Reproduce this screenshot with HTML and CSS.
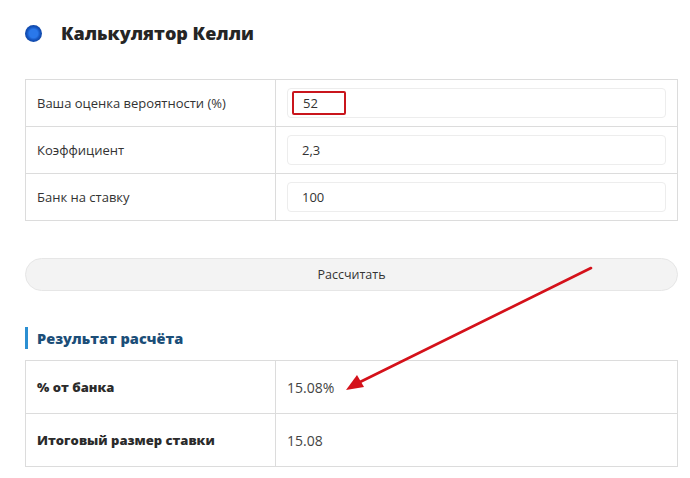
FILE: index.html
```html
<!DOCTYPE html>
<html lang="ru">
<head>
<meta charset="utf-8">
<link rel="stylesheet" href="styles.css">
</head>
<body>
<div class="page">
  <div class="title-row">
    <span class="dot"></span>
    <h1 class="title">Калькулятор Келли</h1>
  </div>

  <div class="table inputs">
    <div class="row">
      <div class="cell label">Ваша оценка вероятности (%)</div>
      <div class="cell value"><div class="input"><span class="mark">52</span></div></div>
    </div>
    <div class="row">
      <div class="cell label">Коэффициент</div>
      <div class="cell value"><div class="input">2,3</div></div>
    </div>
    <div class="row">
      <div class="cell label">Банк на ставку</div>
      <div class="cell value"><div class="input">100</div></div>
    </div>
  </div>

  <div class="button">Рассчитать</div>

  <h2 class="result-title">Результат расчёта</h2>

  <div class="table results">
    <div class="row">
      <div class="cell label bold">% от банка</div>
      <div class="cell value text">15.08%</div>
    </div>
    <div class="row">
      <div class="cell label bold">Итоговый размер ставки</div>
      <div class="cell value text">15.08</div>
    </div>
  </div>

  <svg class="arrow" width="690" height="478" viewBox="0 0 690 478">
    <line x1="591" y1="268" x2="358" y2="383" stroke="#d4111a" stroke-width="2.6" stroke-linecap="round"/>
    <polygon points="346,390 357,375 364,387" fill="#d4111a"/>
  </svg>
</div>
</body>
</html>
```
FILE: styles.css
```css
* { box-sizing: border-box; }
body {
  margin: 0;
  background: #fff;
  font-family: "Open Sans", "Noto Sans", sans-serif;
  color: #333;
}
.page {
  position: relative;
  width: 690px;
  height: 478px;
  padding: 21px 12px 0 25px;
}
.title-row {
  display: flex;
  align-items: center;
  gap: 19px;
  height: 24px;
}
.dot {
  width: 17px;
  height: 17px;
  border-radius: 50%;
  background: radial-gradient(circle, #2a78ea 0 35%, #1453bd 55%, #0a3480 100%);
}
.title {
  margin: 0;
  font-size: 18px;
  font-weight: 800;
  color: #252525;
}
.table {
  width: 653px;
  border: 1px solid #dcdcdc;
  border-bottom: none;
}
.inputs { margin-top: 34px; }
.row {
  display: grid;
  grid-template-columns: 250px 1fr;
  border-bottom: 1px solid #dcdcdc;
}
.inputs .row { height: 47px; }
.results .row { height: 53px; }
.cell {
  display: flex;
  align-items: center;
}
.label {
  padding-left: 11px;
  border-right: 1px solid #dcdcdc;
  font-size: 13px;
  color: #333;
}
.label.bold {
  font-weight: 800;
  font-size: 13px;
  color: #2b2b2b;
}
.value { padding: 0 11px 0 11px; }
.input {
  width: 100%;
  height: 30px;
  border: 1px solid #ededed;
  border-radius: 4px;
  background: #fff;
  display: flex;
  align-items: center;
  padding-left: 14px;
  font-size: 13px;
  color: #333;
}
.mark {
  display: flex;
  align-items: center;
  width: 54px;
  height: 24px;
  margin-left: -10px;
  padding-left: 9px;
  border: 2px solid #c9151c;
  border-radius: 2px;
}
.text {
  font-size: 14px;
  color: #444;
}
.button {
  margin-top: 37px;
  width: 653px;
  height: 33px;
  border-radius: 17px;
  background: #f3f3f3;
  border: 1px solid #e6e6e6;
  display: flex;
  align-items: center;
  justify-content: center;
  font-size: 12.5px;
  color: #333;
}
.result-title {
  margin: 36px 0 0 0;
  height: 22px;
  border-left: 3px solid #2b8fd2;
  padding-left: 9px;
  font-size: 14.5px;
  font-weight: 800;
  color: #1b4e78;
  display: flex;
  align-items: center;
}
.results { margin-top: 11px; }
.arrow {
  position: absolute;
  left: 0;
  top: 0;
  pointer-events: none;
}
```
